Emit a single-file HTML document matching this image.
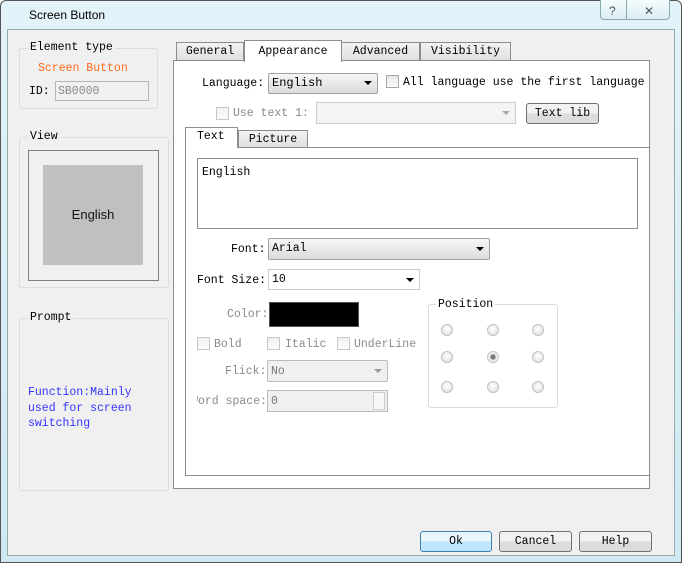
<!DOCTYPE html><html><head><style>
*{box-sizing:border-box;margin:0;padding:0}
body{width:682px;height:563px;position:relative;overflow:hidden;background:#fff;font-family:"Liberation Mono","Noto Sans CJK SC",monospace;font-size:11.5px;color:#000}
.a{position:absolute}
.t{position:absolute;white-space:nowrap;line-height:14px;margin-top:1px}
.g{color:#8a8a8a}
.grp{position:absolute;border:1px solid #d8dde2;border-radius:3px}
.grp>span{position:absolute;top:-8px;left:8px;background:#f0f0f0;padding:0 2px;line-height:14px}
.cb{position:absolute;width:13px;height:13px;border:1px solid #a5a5a5;background:linear-gradient(#e8e8e8,#fafafa)}
.combo{position:absolute;border:1px solid #a0a0a0;border-radius:2px;background:linear-gradient(#f6f6f6,#dcdcdc);padding-left:3px;line-height:19px}
.arr{position:absolute;right:5px;top:7px;width:0;height:0;border-left:4px solid transparent;border-right:4px solid transparent;border-top:4px solid #000}
.btn{position:absolute;border:1px solid #707070;border-radius:3px;background:linear-gradient(#f2f2f2 50%,#dcdcdc 50%);text-align:center;line-height:20px}
.rad{position:absolute;width:12px;height:12px;border-radius:50%;border:1px solid #c0c0c0;background:radial-gradient(circle at 50% 40%,#fff,#ddd)}
.tab{position:absolute;border:1px solid #8d8d8d;border-bottom:none;background:linear-gradient(#f3f3f3,#dedede);text-align:center;line-height:18px}
</style></head><body>
<div class="a" style="left:0;top:0;width:682px;height:563px;border:1px solid #555;border-radius:6px 6px 0 0;background:linear-gradient(#e2f3f9,#cfe8f2)"></div>
<div class="t" style="left:29px;top:7px;font-family:'Liberation Sans',sans-serif;font-size:12px">Screen Button</div>
<div class="a" style="left:600px;top:0;width:70px;height:20px;border:1px solid #8aa;border-top:none;border-radius:0 0 4px 4px;background:linear-gradient(#f4fbfd,#dbeef5)"></div>
<div class="a" style="left:626px;top:0;width:1px;height:20px;background:#8aa"></div>
<div class="t" style="left:609px;top:3px;font-family:'Liberation Sans',sans-serif;font-size:12px;color:#555">?</div>
<div class="t" style="left:644px;top:3px;font-family:'Liberation Sans',sans-serif;font-size:12px;color:#555">✕</div>
<div class="a" style="left:7px;top:29px;width:668px;height:527px;background:#f0f0f0;border:1px solid #9aa"></div>

<div class="grp" style="left:19px;top:48px;width:139px;height:61px"><span>Element type</span></div>
<div class="t" style="left:38px;top:61px;color:#ff6a1a">Screen Button</div>
<div class="t" style="left:29px;top:84px">ID:</div>
<div class="a" style="left:55px;top:81px;width:94px;height:20px;border:1px solid #b5b5b5;background:#f0f0f0"></div>
<div class="t g" style="left:58px;top:84px">SB0000</div>

<div class="grp" style="left:19px;top:137px;width:150px;height:151px"><span>View</span></div>
<div class="a" style="left:28px;top:150px;width:131px;height:131px;border:1px solid #808080"></div>
<div class="a" style="left:43px;top:165px;width:100px;height:100px;background:#c0c0c0;font-family:'Liberation Sans',sans-serif;font-size:13px;line-height:100px;text-align:center;color:#111">English</div>

<div class="grp" style="left:19px;top:318px;width:150px;height:173px"><span>Prompt</span></div>
<div class="t" style="left:28px;top:384px;color:#3434ff;line-height:15.5px">Function:Mainly<br>used for screen<br>switching</div>

<div class="tab" style="left:176px;top:42px;width:68px;height:19px">General</div>
<div class="tab" style="left:341px;top:42px;width:79px;height:19px">Advanced</div>
<div class="tab" style="left:420px;top:42px;width:91px;height:19px">Visibility</div>
<div class="a" style="left:173px;top:60px;width:477px;height:429px;border:1px solid #8d8d8d;background:#fff"></div>
<div class="a" style="left:244px;top:40px;width:98px;height:22px;border:1px solid #8d8d8d;border-bottom:none;background:#fff;text-align:center;line-height:21px">Appearance</div>

<div class="t" style="left:202px;top:76px">Language:</div>
<div class="combo" style="left:268px;top:73px;width:110px;height:21px;font-size:12px">English<div class="arr"></div></div>
<div class="cb" style="left:386px;top:75px"></div>
<div class="t" style="left:403px;top:75px">All language use the first language</div>

<div class="cb" style="left:216px;top:107px;opacity:.6"></div>
<div class="t g" style="left:233px;top:106px">Use text 1:</div>
<div class="a" style="left:316px;top:102px;width:200px;height:22px;border:1px solid #ccc;background:#f4f4f4"><div class="arr" style="border-top-color:#aaa;top:8px"></div></div>
<div class="btn" style="left:526px;top:103px;width:73px;height:21px">Text lib</div>

<div class="a" style="left:238px;top:130px;width:70px;height:18px;border:1px solid #8d8d8d;border-bottom:none;background:linear-gradient(#f3f3f3,#dedede);text-align:center;line-height:17px">Picture</div>
<div class="a" style="left:185px;top:147px;width:464px;height:329px;border-left:1px solid #8d8d8d;border-top:1px solid #8d8d8d;border-bottom:1px solid #8d8d8d"></div>
<div class="a" style="left:185px;top:127px;width:53px;height:21px;border:1px solid #8d8d8d;border-bottom:none;background:#fff;line-height:18px;padding-left:11px">Text</div>
<div class="a" style="left:197px;top:158px;width:441px;height:71px;border:1px solid #8d8d8d"></div>
<div class="t" style="left:202px;top:165px">English</div>

<div class="t" style="left:231px;top:242px">Font:</div>
<div class="combo" style="left:268px;top:238px;width:222px;height:22px">Arial<div class="arr" style="top:8px"></div></div>
<div class="t" style="left:197px;top:273px">Font Size:</div>
<div class="a" style="left:268px;top:269px;width:152px;height:21px;border:1px solid #ccc;background:#fff;padding-left:3px;line-height:20px">10<div class="arr" style="top:8px"></div></div>

<div class="t g" style="left:227px;top:307px">Color:</div>
<div class="a" style="left:269px;top:302px;width:90px;height:25px;background:#000;border:1px solid #555"></div>

<div class="cb" style="left:197px;top:337px;opacity:.6"></div><div class="t g" style="left:214px;top:337px">Bold</div>
<div class="cb" style="left:267px;top:337px;opacity:.6"></div><div class="t g" style="left:285px;top:337px">Italic</div>
<div class="cb" style="left:337px;top:337px;opacity:.6"></div><div class="t g" style="left:354px;top:337px">UnderLine</div>

<div class="t g" style="left:225px;top:364px">Flick:</div>
<div class="a" style="left:267px;top:360px;width:121px;height:22px;border:1px solid #bbb;border-radius:2px;background:#f0f0f0;padding-left:3px;line-height:21px;color:#777">No<div class="arr" style="border-top-color:#999;top:8px"></div></div>
<div class="a g" style="left:197px;top:395px;width:70px;height:16px;overflow:hidden"><div class="t" style="right:0;top:0;margin:0">Word space:</div></div>
<div class="a" style="left:267px;top:390px;width:121px;height:22px;border:1px solid #bbb;background:#f0f0f0;padding-left:3px;line-height:21px;color:#777">0<div class="a" style="right:2px;top:1px;width:12px;height:18px;border:1px solid #ccc;background:#f8f8f8"></div></div>

<div class="a" style="left:428px;top:304px;width:130px;height:104px;border:1px solid #d4dce4;border-radius:3px"></div>
<div class="t" style="left:436px;top:297px;background:#fff;padding:0 2px">Position</div>
<div class="rad" style="left:441px;top:324px"></div><div class="rad" style="left:487px;top:324px"></div><div class="rad" style="left:532px;top:324px"></div>
<div class="rad" style="left:441px;top:351px"></div><div class="rad" style="left:487px;top:351px;background:radial-gradient(circle,#777 2px,#ddd 3px,#fff 5px)"></div><div class="rad" style="left:532px;top:351px"></div>
<div class="rad" style="left:441px;top:381px"></div><div class="rad" style="left:487px;top:381px"></div><div class="rad" style="left:532px;top:381px"></div>

<div class="btn" style="left:420px;top:531px;width:72px;height:21px;border-color:#3c7fb1;background:linear-gradient(#eaf6fd 50%,#bee6fd 50%)">Ok</div>
<div class="btn" style="left:499px;top:531px;width:73px;height:21px">Cancel</div>
<div class="btn" style="left:579px;top:531px;width:73px;height:21px">Help</div>
</body></html>
